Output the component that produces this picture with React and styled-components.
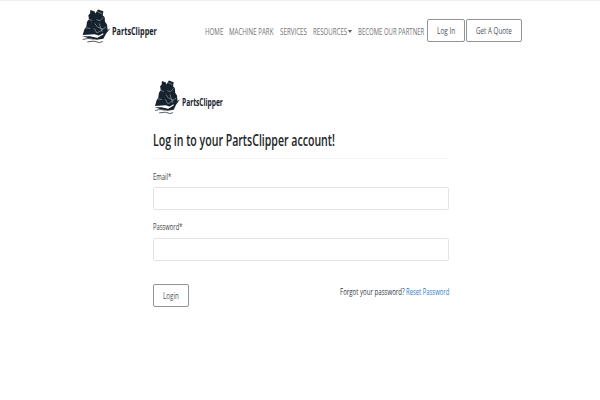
import React, { useLayoutEffect, useRef, useState } from 'react';
import styled, { createGlobalStyle } from 'styled-components';

const GlobalStyle = createGlobalStyle`
  * { box-sizing: border-box; }
  body {
    margin: 0;
    background: #fff;
    color: #24292e;
    font-family: "Open Sans", "Noto Sans", sans-serif;
    font-size: 9px;
    overflow: hidden;
  }
`;

const Slot = styled.span`
  display: block;
  flex: none;
  width: ${(p) => p.$width}px;
  white-space: nowrap;
`;

const Glyphs = styled.span`
  display: inline-block;
  transform-origin: 0 50%;
`;

/* Condenses a line of text to a fixed width. */
function Condensed({ width, children }) {
  const ref = useRef(null);
  const [scale, setScale] = useState(1);
  useLayoutEffect(() => {
    setScale(width / ref.current.offsetWidth);
  }, [width, children]);
  return (
    <Slot $width={width}>
      <Glyphs ref={ref} style={{ transform: `scaleX(${scale})` }}>{children}</Glyphs>
    </Slot>
  );
}

const Page = styled.div`
  height: 400px;
  border-top: 1px solid #eeeef5;
`;

const Header = styled.header`
  display: flex;
  align-items: flex-start;
  height: 59px;
  padding: 5px 0 0 76px;
`;

const Brand = styled.a`
  display: flex;
  align-items: center;
  height: 41px;
  color: #17212b;
  font-size: 10px;
  font-weight: 700;
  line-height: 14px;
`;

const BrandName = styled.span`
  padding-top: 9px;
`;

const ShipIcon = styled.svg`
  display: block;
  flex: none;
`;

const Nav = styled.nav`
  display: flex;
  align-items: center;
  gap: 6px;
  margin: 13px 0 0 47.5px;
  height: 24px;
  color: #727272;
  line-height: 14px;
`;

const NavItem = styled.a`
  display: flex;
  align-items: center;
  padding-top: 2px;
`;

const Caret = styled.i`
  margin: -2px 0 0 1.5px;
  border: 2px solid transparent;
  border-top: 3px solid #55595d;
  border-bottom: 0;
`;

const Actions = styled.div`
  display: flex;
  gap: 1px;
  margin: 13px 0 0 3px;
`;

const Button = styled.button`
  display: flex;
  align-items: center;
  justify-content: center;
  width: ${(p) => p.$width}px;
  height: 23px;
  padding: 1px 0 0;
  border: 1px solid #919497;
  border-radius: 2px;
  background: #fff;
  color: #4c5156;
  font: inherit;
  line-height: 14px;
`;

const Main = styled.main`
  width: 296px;
  margin: 17px 0 0 153px;
`;

const LogoRow = styled.div`
  height: 41px;
  margin-left: -4px;
`;

const Title = styled.h1`
  margin: 0;
  height: 41px;
  padding-top: 11px;
  border-bottom: 1px solid #f5f5f6;
  font-size: 15.5px;
  font-weight: 600;
  line-height: 23px;
  color: #212529;
`;

const Field = styled.label`
  display: block;
  padding-top: ${(p) => p.$top}px;
  line-height: 14px;
  font-size: 8.5px;
  color: #3c4145;
`;

const Input = styled.input`
  display: block;
  width: 296px;
  height: 23px;
  margin-top: ${(p) => p.$gap}px;
  border: 1px solid #e1e3e5;
  border-radius: 2px;
  background: #fff;
  outline: none;
`;

const FormFooter = styled.div`
  display: flex;
  justify-content: space-between;
  align-items: flex-start;
  margin-top: 23px;
`;

const Reset = styled.p`
  display: flex;
  gap: 2px;
  margin: 0;
  padding-top: 1px;
  line-height: 14px;
  font-size: 8.5px;
  color: #33383d;
`;

const Link = styled.a`
  color: #2b7bd0;
`;

function Ship({ width, height }) {
  return (
    <ShipIcon width={width} height={height} viewBox="0 0 108 120" preserveAspectRatio="none">
      <path fill="#17222f" d="M43 12L56 16L58 22L66 10L82 15L80 27L86 33L87 46L93 54L95 70L87 80L72 88L56 83L20 85L25 69L31 60L33 46L39 39L37 27L42 22Z" />
      <path fill="#17222f" d="M18 88L44 88L64 92L76 86L86 76L103 65L90 81L82 96L62 99L36 94Z" />
      <g fill="none" stroke="#b3bdc6" strokeWidth="1.6">
        <path d="M64 17L78 22M61 40L72 43L82 33" />
        <path d="M56 51L65 62L81 67M70 51L74 64L79 76" />
        <path d="M54 65L63 79L75 72L91 61" />
        <path d="M39 39L49 43M29 64L43 66" />
      </g>
      <path fill="none" stroke="#fff" strokeWidth="3" d="M19 87L43 87L63 91L82 81" />
      <path fill="none" stroke="#3a4550" strokeWidth="2.6" d="M20 98L36 95L54 97M34 105L54 103L70 107L80 104" />
    </ShipIcon>
  );
}

export default function App() {
  return (
    <>
      <GlobalStyle />
      <Page>
        <Header>
          <Brand>
            <Ship width={36} height={41} />
            <BrandName><Condensed width={45}>PartsClipper</Condensed></BrandName>
          </Brand>
          <Nav>
            <NavItem><Condensed width={18.5}>HOME</Condensed></NavItem>
            <NavItem><Condensed width={44.5}>MACHINE PARK</Condensed></NavItem>
            <NavItem><Condensed width={27}>SERVICES</Condensed></NavItem>
            <NavItem><Condensed width={34}>RESOURCES</Condensed><Caret /></NavItem>
            <NavItem><Condensed width={66}>BECOME OUR PARTNER</Condensed></NavItem>
          </Nav>
          <Actions>
            <Button $width={38}><Condensed width={18}>Log In</Condensed></Button>
            <Button $width={56}><Condensed width={35.5}>Get A Quote</Condensed></Button>
          </Actions>
        </Header>
        <Main>
          <LogoRow>
            <Brand>
              <Ship width={32.5} height={41} />
              <BrandName><Condensed width={41}>PartsClipper</Condensed></BrandName>
            </Brand>
          </LogoRow>
          <Title><Condensed width={182}>Log in to your PartsClipper account!</Condensed></Title>
          <form>
            <Field $top={11}>
              <Condensed width={18}>Email*</Condensed>
              <Input type="email" $gap={3} />
            </Field>
            <Field $top={10}>
              <Condensed width={29.5}>Password*</Condensed>
              <Input type="password" $gap={4} />
            </Field>
            <FormFooter>
              <Button type="button" $width={36}><Condensed width={16}>Login</Condensed></Button>
              <Reset>
                <Condensed width={64.5}>Forgot your password?</Condensed>
                <Link><Condensed width={43}>Reset Password</Condensed></Link>
              </Reset>
            </FormFooter>
          </form>
        </Main>
      </Page>
    </>
  );
}
